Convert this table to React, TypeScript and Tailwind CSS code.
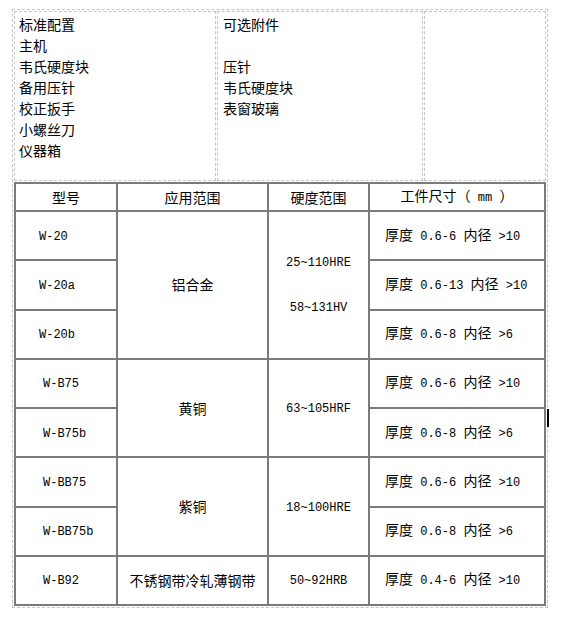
import React from "react";

const cjk = "font-['Noto_Sans_CJK_SC',sans-serif]";

// SimSun-style mixed text: ascii runs in a narrow mono face
function Txt({ s }: { s: string }) {
  const parts = s.split(/([\x20-\x7e]+)/);
  return (
    <span className="whitespace-pre">
      {parts.map((p, i) =>
        /^[\x20-\x7e]+$/.test(p) ? (
          <span key={i} className="font-['Liberation_Mono',monospace] text-[12px]">
            {p}
          </span>
        ) : (
          p
        )
      )}
    </span>
  );
}

const rows = [
  { model: "W-20", pad: "pl-[23px]", size: "厚度 0.6-6 内径 >10" },
  { model: "W-20a", pad: "pl-[23px]", size: "厚度 0.6-13 内径 >10" },
  { model: "W-20b", pad: "pl-[23px]", size: "厚度 0.6-8 内径 >6" },
  { model: "W-B75", pad: "pl-[27px]", size: "厚度 0.6-6 内径 >10" },
  { model: "W-B75b", pad: "pl-[27px]", size: "厚度 0.6-8 内径 >6" },
  { model: "W-BB75", pad: "pl-[27px]", size: "厚度 0.6-6 内径 >10" },
  { model: "W-BB75b", pad: "pl-[27px]", size: "厚度 0.6-8 内径 >6" },
  { model: "W-B92", pad: "pl-[27px]", size: "厚度 0.4-6 内径 >10" },
];

// merged cells keyed by first row index
const groups: Record<number, { span: string; app: string; hard: string[] }> = {
  0: { span: "row-span-3", app: "铝合金", hard: ["25~110HRE", "58~131HV"] },
  3: { span: "row-span-2", app: "黄铜", hard: ["63~105HRF"] },
  5: { span: "row-span-2", app: "紫铜", hard: ["18~100HRE"] },
  7: { span: "row-span-1", app: "不锈钢带冷轧薄钢带", hard: ["50~92HRB"] },
};

const cell = "bg-white flex items-center";

export default function App() {
  return (
    <div className={`relative min-h-[622px] w-[561px] bg-white text-black ${cjk}`}>
      <div className="ml-[12px] pt-[9px]">
        <div className="w-[536px] border border-dashed border-[#c4c4c4] p-[1px]">
          {/* accessories */}
          <div className="flex gap-[1px] h-[170px] text-[14px] leading-[21px]">
            <div className="w-[202px] border border-dashed border-[#c4c4c4] pl-[4px] pt-[2px]">
              <div>标准配置</div>
              <div>主机</div>
              <div>韦氏硬度块</div>
              <div>备用压针</div>
              <div>校正扳手</div>
              <div>小螺丝刀</div>
              <div>仪器箱</div>
            </div>
            <div className="w-[206px] border border-dashed border-[#c4c4c4] pl-[5px] pt-[2px]">
              <div>可选附件</div>
              <div>&nbsp;</div>
              <div>压针</div>
              <div>韦氏硬度块</div>
              <div>表窗玻璃</div>
            </div>
            <div className="w-[122px] border border-dashed border-[#c4c4c4]" />
          </div>

          {/* models */}
          <div className="mt-[1px] grid grid-cols-[100px_149px_99px_174px] grid-rows-[26px_repeat(8,47.25px)] gap-[2px] bg-[#7a7a7a] p-[2px] text-[14px] leading-[21px]">
            <div className={`${cell} justify-center`}>型号</div>
            <div className={`${cell} justify-center`}>应用范围</div>
            <div className={`${cell} justify-center`}>硬度范围</div>
            <div className={`${cell} justify-center`}>
              <Txt s="工件尺寸（ mm ）" />
            </div>
            {rows.map((r, i) => (
              <React.Fragment key={r.model}>
                <div className={`${cell} ${r.pad}`}>
                  <Txt s={r.model} />
                </div>
                {groups[i] && (
                  <>
                    <div className={`${cell} ${groups[i].span} justify-center`}>{groups[i].app}</div>
                    <div className={`${cell} ${groups[i].span} justify-center flex-col`}>
                      {groups[i].hard.map((h, k) => (
                        <div key={h} className={k > 0 ? "mt-[21px]" : ""}>
                          <Txt s={h} />
                        </div>
                      ))}
                    </div>
                  </>
                )}
                <div className={`${cell} pl-[15px]`}>
                  <Txt s={r.size} />
                </div>
              </React.Fragment>
            ))}
          </div>
        </div>
      </div>
      {/* text caret */}
      <div className="absolute left-[547px] top-[409px] h-[18px] w-[2px] bg-black" />
    </div>
  );
}
